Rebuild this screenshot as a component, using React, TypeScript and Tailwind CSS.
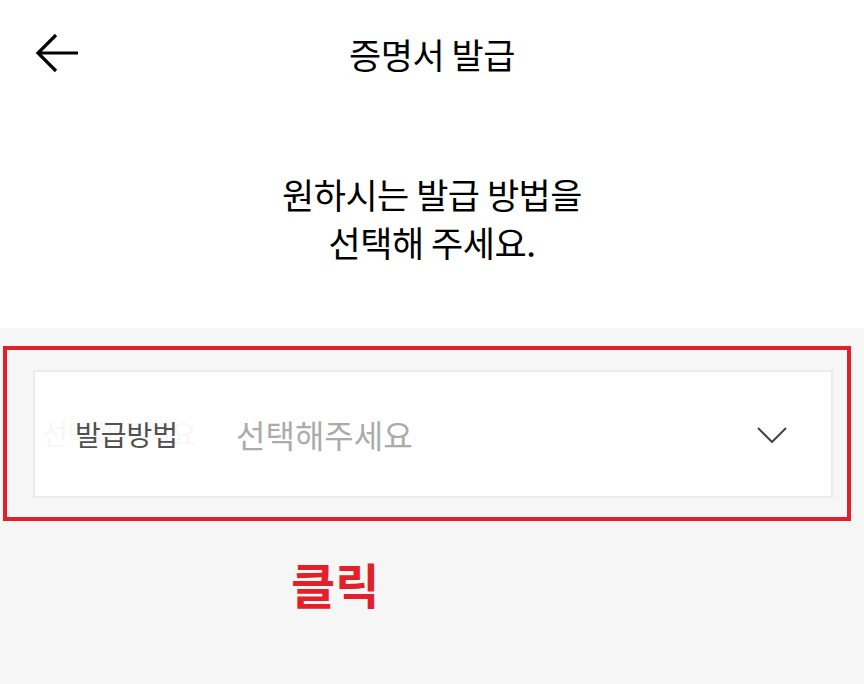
const FONT = '"Noto Sans CJK KR", "Noto Sans", sans-serif';

function BackArrow() {
  return (
    <svg width="46" height="42" viewBox="0 0 46 42" fill="none" stroke="currentColor" strokeWidth="3.2" strokeLinecap="butt">
      <path d="M4 21H44" />
      <path d="M22 3L4 21L22 39" />
    </svg>
  );
}

function Chevron() {
  return (
    <svg width="30" height="16" viewBox="0 0 30 16" fill="none" stroke="#444" strokeWidth="2">
      <path d="M1 1L15 15L29 1" />
    </svg>
  );
}

export default function App() {
  return (
    <div className="flex h-[684px] w-[864px] flex-col bg-white text-black" style={{ fontFamily: FONT }}>
      {/* header */}
      <header className="relative flex h-[106px] items-center justify-center">
        <button type="button" className="absolute left-[34px] top-[32px] text-black">
          <BackArrow />
        </button>
        <h1 className="text-[35px] font-normal leading-none tracking-[-0.5px]">증명서 발급</h1>
      </header>

      <p className="mt-[64px] text-center text-[35px] leading-[48px] tracking-[-0.5px]">
        원하시는 발급 방법을
        <br />
        선택해 주세요.
      </p>

      <section className="mt-[62px] flex-1 bg-[#f6f6f6] px-[3px] pt-[18px]">
        <div className="w-[848px] border-[4px] border-[#e31f2a] pb-[19px] pl-[26px] pr-[14px] pt-[20px]">
          <div className="relative flex h-[128px] items-center border-2 border-[#ebebeb] bg-white">
            <span className="absolute left-[7px] top-[47px] text-[28px] leading-none text-[#f7f7f7]">선택해주세요</span>
            <span className="relative ml-[40px] w-[161px] text-[28px] leading-none text-[#505050]">발급방법</span>
            <span className="flex-1 text-[32px] leading-none text-[#ababab]">선택해주세요</span>
            <span className="mr-[44px] mt-[2px]">
              <Chevron />
            </span>
          </div>
        </div>
        <p className="ml-[288px] mt-[38px] text-[48px] font-bold leading-none text-[#e31f2a]">클릭</p>
      </section>
    </div>
  );
}
